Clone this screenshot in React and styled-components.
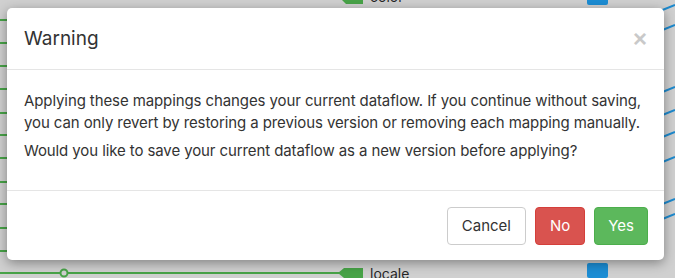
import styled, { createGlobalStyle } from "styled-components";

const GlobalStyle = createGlobalStyle`
    html, body {
        margin: 0;
        padding: 0;
        background: #d9d9d9;
    }
    * {
        box-sizing: border-box;
    }
`

const Stage = styled.div`
    position: relative;
    width: 675px;
    height: 278px;
    overflow: hidden;
    background: #e2e2e2;
    font-family: Inter, "Liberation Sans", Arial, sans-serif;
`

const Diagram = styled.svg`
    position: absolute;
    left: 0;
    top: 0;
`

const NodeLabel = styled.span`
    position: absolute;
    left: ${props => props.x}px;
    top: ${props => props.y}px;
    font-size: 14px;
    color: #2a2a2a;
`

const Backdrop = styled.div`
    position: absolute;
    inset: 0;
    background: rgba(0, 0, 0, 0.08);
    padding: 8px 11px 0 7px;
`

const Modal = styled.div`
    width: 657px;
    background: #ffffff;
    border-radius: 5px;
    box-shadow: 0 3px 12px rgba(0, 0, 0, 0.38);
    color: #333333;
`

const Header = styled.div`
    height: 62px;
    display: flex;
    align-items: center;
    justify-content: space-between;
    padding: 0 17px;
    border-bottom: 1px solid #e5e5e5;

    h5 {
        margin: 0;
        font-size: 19px;
        font-weight: 400;
        color: #333333;
    }

    button {
        border: none;
        background: none;
        padding: 0;
        font-size: 24px;
        font-weight: 700;
        line-height: 1;
        color: #c9c9c9;
        cursor: pointer;
        font-family: "Liberation Sans", Arial, sans-serif;
    }
`

const Body = styled.div`
    padding: 20px 15px 29px 17px;

    p {
        margin: 0;
        font-size: 15px;
        line-height: 21.5px;
        letter-spacing: -0.1px;
    }

    p + p {
        margin-top: 6.5px;
    }
`

const Footer = styled.div`
    height: 70px;
    display: flex;
    align-items: center;
    justify-content: flex-end;
    gap: 9px;
    padding: 0 16px;
    border-top: 1px solid #e5e5e5;
`

const Button = styled.button`
    height: 38px;
    padding: 0 ${props => props.pad}px;
    border-radius: 4px;
    font-size: 15px;
    font-family: Inter, "Liberation Sans", Arial, sans-serif;
    cursor: pointer;
    border: 1px solid ${props => props.type.border};
    background: ${props => props.type.background};
    color: ${props => props.type.color};
`

const cancel = {background: "#ffffff", border: "#cccccc", color: "#333333"};
const no = {background: "#d9534f", border: "#d43f3a", color: "#ffffff"};
const yes = {background: "#5cb85c", border: "#4cae4c", color: "#ffffff"};

const leftLines = [20, 43, 66, 89, 113, 135, 158, 182, 204, 228, 251];
const rightLines = [8, 28, 90, 113, 135, 160, 202, 217];

function Background(){
    return (
        <>
            <Diagram width="675" height="278" viewBox="0 0 675 278">
                {leftLines.map(y => (
                    <line key={y} x1="0" y1={y} x2="30" y2={y} stroke="#4fb14f" strokeWidth="2" />
                ))}
                {rightLines.map(y => (
                    <line key={y} x1="660" y1={y + 3} x2="675" y2={y - 3} stroke="#2196e0" strokeWidth="2" />
                ))}
                <line x1="0" y1="273" x2="345" y2="273" stroke="#4fb14f" strokeWidth="2" />
                <circle cx="64" cy="273" r="3.5" fill="#e2e2e2" stroke="#4fb14f" strokeWidth="2" />
                <path d="M344 268 H363 V278 H344 L338 273 Z" fill="#4fb14f" />
                <path d="M346 -10 H363 V4 H346 L340 -2 Z" fill="#4fb14f" />
                <rect x="587" y="263" width="21" height="15" rx="2" fill="#1f9ae6" />
                <rect x="587" y="-6" width="21" height="11" rx="2" fill="#1f9ae6" />
            </Diagram>
            <NodeLabel x={370} y={-12}>color</NodeLabel>
            <NodeLabel x={370} y={265}>locale</NodeLabel>
        </>
    );
}

export default function App(){
    return (
        <Stage>
            <GlobalStyle />
            <Background />
            <Backdrop>
                <Modal>
                    <Header>
                        <h5>Warning</h5>
                        <button>×</button>
                    </Header>
                    <Body>
                        <p>Applying these mappings changes your current dataflow. If you continue without saving, you can only revert by restoring a previous version or removing each mapping manually.</p>
                        <p>Would you like to save your current dataflow as a new version before applying?</p>
                    </Body>
                    <Footer>
                        <Button type={cancel} pad={14}>Cancel</Button>
                        <Button type={no} pad={14}>No</Button>
                        <Button type={yes} pad={13}>Yes</Button>
                    </Footer>
                </Modal>
            </Backdrop>
        </Stage>
    );
}
